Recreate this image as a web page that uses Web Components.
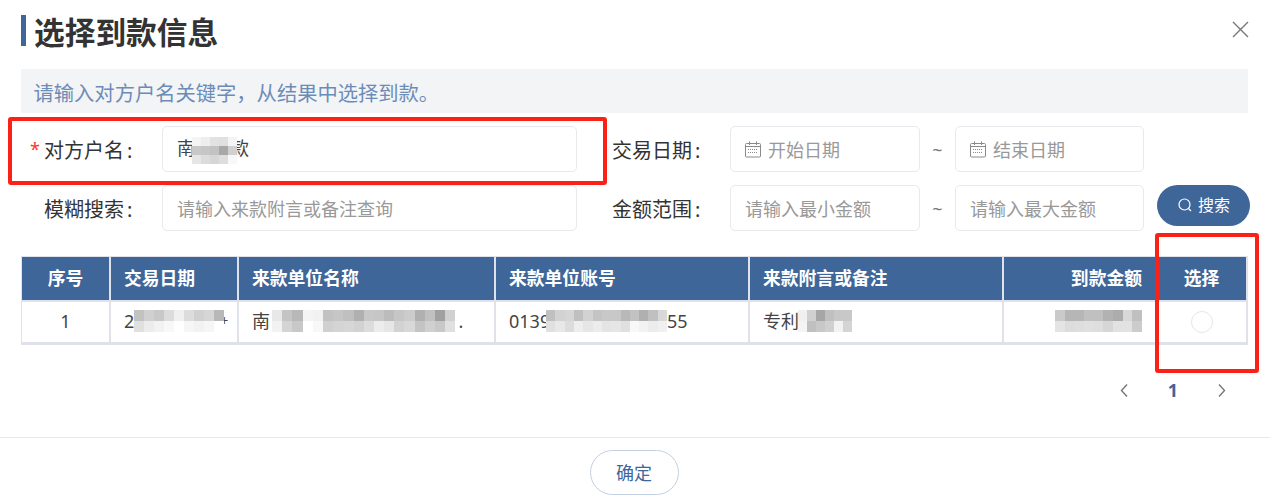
<!DOCTYPE html>
<html lang="zh">
<head>
<meta charset="utf-8">
<title>选择到款信息</title>
<style>
html,body{margin:0;padding:0;background:#fff;}
body{font-family:"Noto Sans","Noto Sans CJK SC",sans-serif;color:#333;}
</style>
</head>
<body>
<x-dialog>
  <x-title slot="title">选择到款信息</x-title>
  <x-hint slot="hint">请输入对方户名关键字，从结果中选择到款。</x-hint>
  <x-form slot="form"></x-form>
  <x-table slot="table"></x-table>
  <x-pager slot="pager"></x-pager>
  <x-pill slot="ok">确定</x-pill>
</x-dialog>
<script>
const FONT='"Noto Sans","Noto Sans CJK SC",sans-serif';
const CAL='<svg width="16" height="17" viewBox="0 0 16 17" fill="none" stroke="#8a8a8a" stroke-width="1"><rect x=".5" y="2.5" width="15" height="13.5" rx="1"/><path d="M.5 5.5h15M4.5 .5v3.5M11.5 .5v3.5"/><path d="M3 8.5h10M3 11.5h10" stroke-dasharray="1 1"/></svg>';

function def(name,html,init){
  customElements.define(name,class extends HTMLElement{
    constructor(){super();this.attachShadow({mode:'open'}).innerHTML=html;}
    connectedCallback(){if(init&&!this._d){this._d=1;init.call(this,this.shadowRoot);}}
  });
}

def('x-mosaic',`<style>
:host{display:inline-grid;position:relative;z-index:1;vertical-align:middle;filter:blur(.5px);}
i{display:block;}
</style>`,function(r){
  const rows=this.getAttribute('data').split('|').map(s=>s.trim().split(/\s+/));
  const cw=+this.getAttribute('cw')||9,ch=+this.getAttribute('ch')||11;
  this.style.gridTemplateColumns=`repeat(${rows[0].length},${cw}px)`;
  this.style.gridAutoRows=ch+'px';
  rows.forEach(row=>row.forEach(v=>{
    const c=document.createElement('i');
    c.style.background='#'+v+v+v;
    r.appendChild(c);
  }));
});

def('x-title',`<style>
:host{display:flex;align-items:center;height:31px;border-left:5px solid #3f6699;padding-left:8px;
font:bold 30.7px/31px ${FONT};color:#333;}
span{display:block;padding-top:3px;}
</style><span><slot></slot></span>`);

def('x-hint',`<style>
:host{display:flex;align-items:center;box-sizing:border-box;height:44px;background:#f3f4f6;padding:3px 0 0 12.5px;
font:20.3px/36px ${FONT};color:#6c8cb8;}
</style><slot></slot>`);

def('x-input',`<style>
:host{display:flex;align-items:center;gap:7px;box-sizing:border-box;height:46px;border:1px solid #e8e9ec;border-radius:5px;
padding:1px 0 0 14px;font:18px/26px ${FONT};color:#999;background:#fff;white-space:nowrap;}
svg{display:block;flex:none;margin-left:0;}
</style><slot></slot>`);

def('x-field-label',`<style>
:host{display:flex;align-items:center;box-sizing:border-box;height:46px;padding-top:3px;font:20px/28px ${FONT};color:#333;white-space:nowrap;}
.c{margin-left:3px;}
</style><slot></slot><span class="c">:</span>`);

def('x-form',`<style>
:host{display:grid;grid-template-columns:141px 415px 35px 118px 190px 35px 189px 13px 93px;grid-template-rows:46px 46px;row-gap:13px;}
.l{padding-left:23px;position:relative;}
.star{position:absolute;left:9px;top:11px;color:#f33;font:18px/24px ${FONT};}
.t{display:flex;align-items:center;justify-content:center;padding-top:2px;font:18px/44px ${FONT};color:#777;}
.v{color:#444;}
x-mosaic{margin:0 -6px 0 -3px;}
.b{grid-column:9;align-self:start;}
</style>
<div class="l"><span class="star">*</span><x-field-label>对方户名</x-field-label></div>
<x-input class="v"><span>南<x-mosaic cw="9" ch="9" data="f4 ee e2 e0 f4|c8 c6 c2 a8 d0|e6 dc d6 de f8"></x-mosaic>款</span></x-input>
<span></span>
<x-field-label>交易日期</x-field-label>
<x-input>${CAL}开始日期</x-input>
<div class="t">~</div>
<x-input>${CAL}结束日期</x-input>
<span></span><span></span>
<div class="l"><x-field-label>模糊搜索</x-field-label></div>
<x-input>请输入来款附言或备注查询</x-input>
<span></span>
<x-field-label>金额范围</x-field-label>
<x-input>请输入最小金额</x-input>
<div class="t">~</div>
<x-input>请输入最大金额</x-input>
<span></span>
<x-search class="b">搜索</x-search>`);

def('x-search',`<style>
:host{display:flex;align-items:center;justify-content:center;gap:5px;width:93px;height:41px;border-radius:21px;background:#3f6699;
color:#fff;font:16px/22px ${FONT};box-sizing:border-box;padding-bottom:1px;}
svg{display:block;}
</style><svg width="16" height="16" viewBox="0 0 16 16" fill="none" stroke="#fff" stroke-width="1.2"><circle cx="7.5" cy="7.5" r="5.5"/><path d="M11.5 11.5l2.5 2.5"/></svg><slot></slot>`);

def('x-table',`<style>
:host{display:block;font:18px/26px ${FONT};color:#444;}
.g{display:grid;grid-template-columns:87px 126px 255px 252px 252px 151px 89px;grid-template-rows:43px 40px;gap:2px;
background:#e0e2eb;padding:1px 1px 3px 1px;}
.h{background:#3f6699;color:#fff;font-weight:bold;font-size:17.8px;display:flex;align-items:center;padding:0 13px 2px;white-space:nowrap;}
.c{background:#fff;display:flex;align-items:center;padding:0 13px 2px;white-space:nowrap;overflow:hidden;}
.ctr{justify-content:center;}
.r{justify-content:flex-end;}
.radio{width:22px;height:22px;border:1px solid #e6e6e8;border-radius:50%;box-sizing:border-box;margin-top:2px;}
</style>
<div class="g">
<div class="h ctr">序号</div><div class="h">交易日期</div><div class="h">来款单位名称</div><div class="h">来款单位账号</div><div class="h">来款附言或备注</div><div class="h r">到款金额</div><div class="h ctr">选择</div>
<div class="c ctr">1</div>
<div class="c">2<x-mosaic cw="10" ch="11" data="c2 d0 c8 dc f0 dc d0 d6 b8|e0 ec f2 f8 ff f6 f2 f6 ff"></x-mosaic><span style="margin-left:-4px;font-size:14px">+</span></div>
<div class="c">南<x-mosaic cw="10.2" ch="11" style="margin-left:2px" data="e8 c4 b8 f4 f2 c2 c6 c0 b0 c8 c6 bc c6 cc b0 c0 a0 d0|f2 d4 c8 ff f8 d0 d4 d6 d2 dc ec e6 d2 d8 c4 d0 c8 e0"></x-mosaic><span style="margin-left:3px">.</span></div>
<div class="c">0139<x-mosaic cw="9.3" ch="11" style="margin-left:-4px" data="c0 d2 d6 c0 d2 c4 c8 c8 b8 c2 b0 c0 d8|e0 e8 dc ee e6 ec e4 e6 e0 f8 f2 ec f0"></x-mosaic>55</div>
<div class="c">专利<x-mosaic cw="9" ch="11" style="margin-left:-1px" data="f0 d0 a6 c0 c8 c8|f4 c0 c8 d0 f2 d4"></x-mosaic></div>
<div class="c r"><x-mosaic cw="9.7" ch="11" data="ca b6 b6 c0 c0 b2 ac d8 c0|e4 dc de e0 de d6 e2 e2 cc"></x-mosaic></div>
<div class="c ctr"><span class="radio"></span></div>
</div>`);

def('x-pager',`<style>
:host{display:flex;align-items:center;justify-content:flex-end;gap:36px;height:30px;font:bold 18px/30px ${FONT};color:#3f6699;}
svg{display:block;}
</style>
<svg width="15" height="15" viewBox="0 0 15 15" fill="none" stroke="#777" stroke-width="1.4"><path d="M10 1.5L4.5 7.5l5.5 6"/></svg>
<span>1</span>
<svg width="15" height="15" viewBox="0 0 15 15" fill="none" stroke="#777" stroke-width="1.4"><path d="M5 1.5l5.5 6-5.5 6"/></svg>`);

def('x-pill',`<style>
:host{display:flex;align-items:center;justify-content:center;box-sizing:border-box;width:89px;height:45px;border:1px solid #c3d0e4;border-radius:23px;
padding-top:1px;font:18px/26px ${FONT};color:#3f6699;background:#fff;}
</style><slot></slot>`);

def('x-dialog',`<style>
:host{display:block;position:relative;width:1270px;height:503px;overflow:hidden;background:#fff;}
.body{padding:15px 22px 0 21px;}
.top{display:flex;justify-content:space-between;align-items:flex-start;}
.close{display:block;margin:5px -2px 0 0;}
.hint{margin-top:23px;}
.form{margin-top:13px;}
.table{margin-top:25px;}
.pager{margin-top:30px;padding-right:19px;}
.foot{margin-top:32px;border-top:1px solid #e8e9ec;display:flex;justify-content:center;padding:12px 2px 0 0;}
.mark{position:absolute;border:4px solid #fb2117;border-radius:3px;box-sizing:border-box;pointer-events:none;}
</style>
<div class="body">
  <div class="top"><slot name="title"></slot>
  <svg class="close" width="19" height="19" viewBox="0 0 19 19" fill="none" stroke="#777" stroke-width="1.4"><path d="M2 2l15 15M17 2L2 17"/></svg></div>
  <div class="hint"><slot name="hint"></slot></div>
  <div class="form"><slot name="form"></slot></div>
  <div class="table"><slot name="table"></slot></div>
  <div class="pager"><slot name="pager"></slot></div>
</div>
<div class="foot"><slot name="ok"></slot></div>
<div class="mark" style="left:8px;top:117px;width:599px;height:68px"></div>
<div class="mark" style="left:1155px;top:233px;width:104px;height:140px"></div>`);
</script>
</body>
</html>
